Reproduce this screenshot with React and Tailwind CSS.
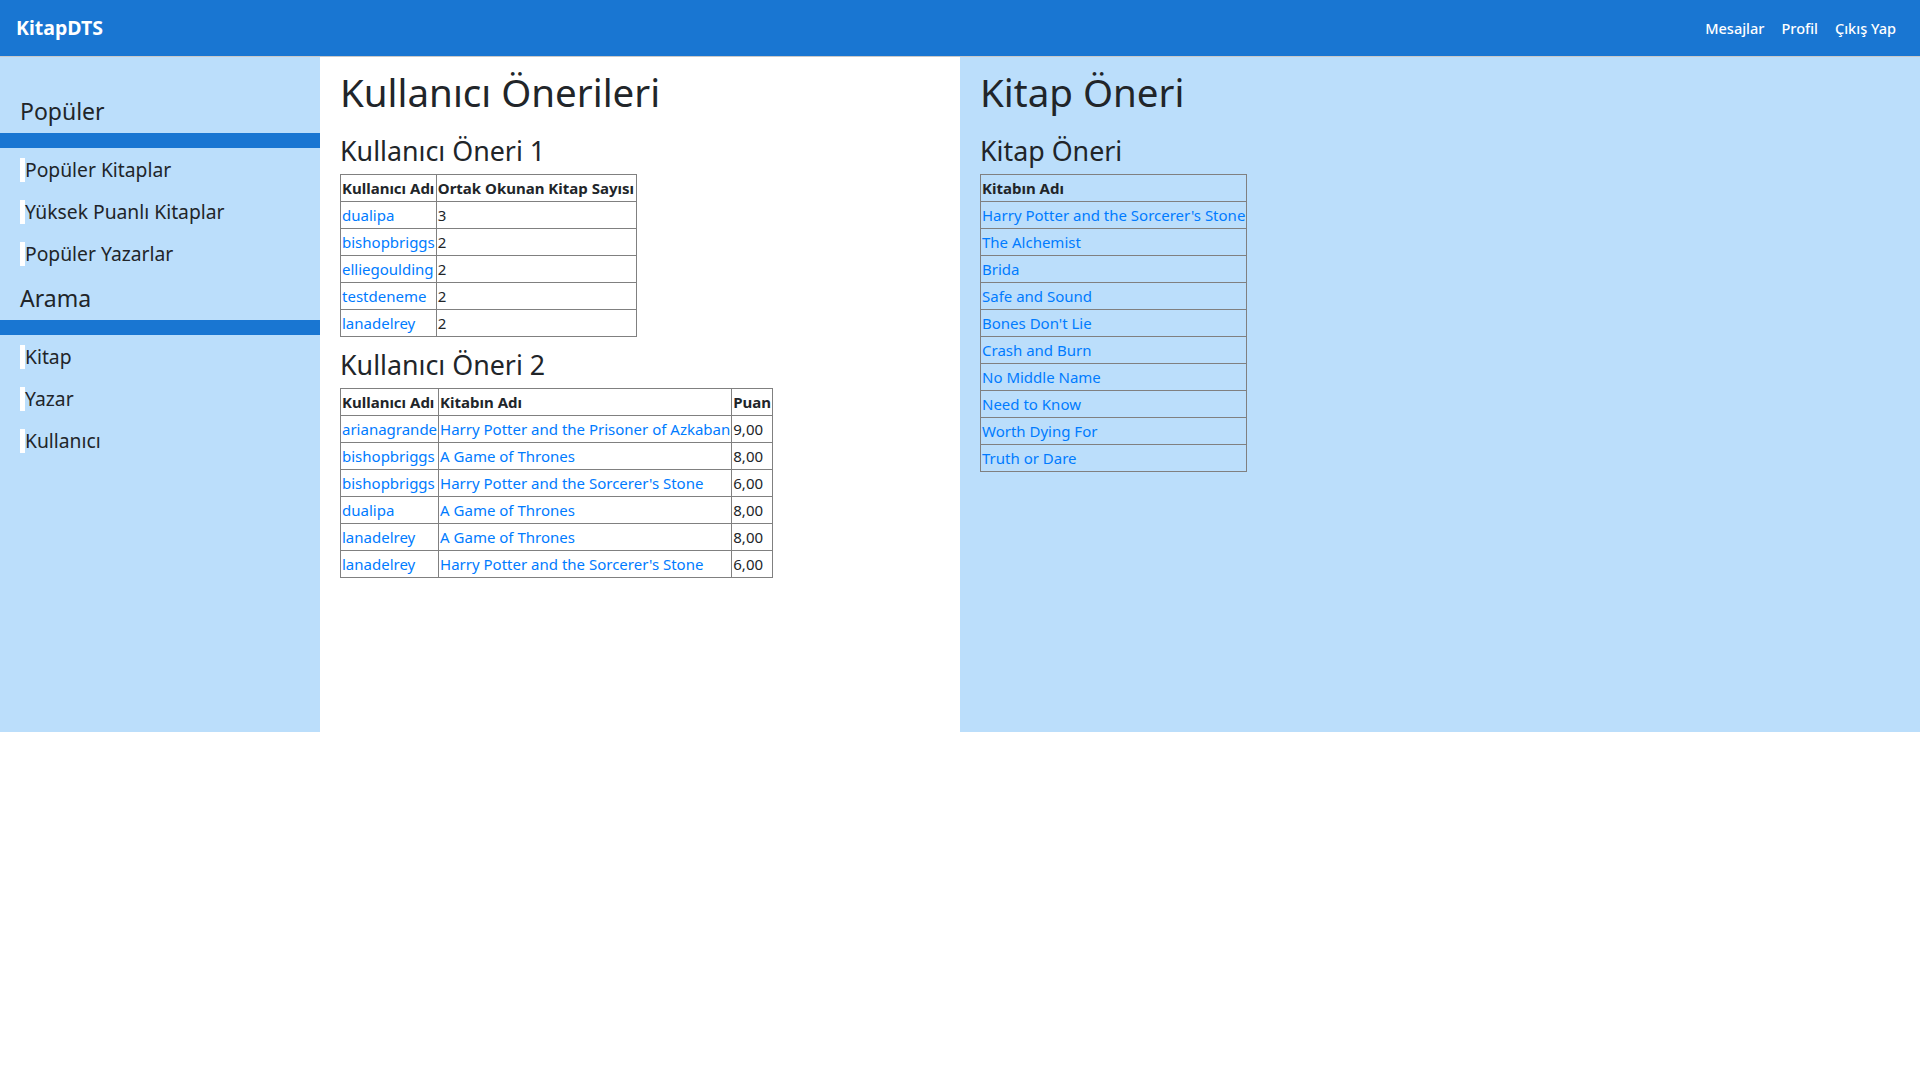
import React from "react";

const oneri1 = [
  ["dualipa", "3"],
  ["bishopbriggs", "2"],
  ["elliegoulding", "2"],
  ["testdeneme", "2"],
  ["lanadelrey", "2"],
];

const oneri2 = [
  ["arianagrande", "Harry Potter and the Prisoner of Azkaban", "9,00"],
  ["bishopbriggs", "A Game of Thrones", "8,00"],
  ["bishopbriggs", "Harry Potter and the Sorcerer's Stone", "6,00"],
  ["dualipa", "A Game of Thrones", "8,00"],
  ["lanadelrey", "A Game of Thrones", "8,00"],
  ["lanadelrey", "Harry Potter and the Sorcerer's Stone", "6,00"],
];

const kitaplar = [
  "Harry Potter and the Sorcerer's Stone",
  "The Alchemist",
  "Brida",
  "Safe and Sound",
  "Bones Don't Lie",
  "Crash and Burn",
  "No Middle Name",
  "Need to Know",
  "Worth Dying For",
  "Truth or Dare",
];

const th = "border border-[#808080] px-[1px] py-[1px] text-[15px] leading-6 text-left font-bold whitespace-nowrap";
const td = "border border-[#808080] px-[1px] py-[1px] text-[15px] leading-6 whitespace-nowrap";
const link = "text-[#007bff]";

const SideSection = ({ title, items, first }) => (
  <>
    <h4 className={`px-5 text-[23px] leading-[29px] mb-[7px] ${first ? "" : "mt-[18px]"}`}>{title}</h4>
    <div className="h-[15px] bg-[#1976d2]"></div>
    <ul className="mt-[10px] flex flex-col gap-[18px] px-5">
      {items.map((it) => (
        <li key={it}>
          <a href="#" className="block border-l-[5px] border-white text-[19.3px] leading-6 text-[#212529]">
            {it}
          </a>
        </li>
      ))}
    </ul>
  </>
);

export default function App() {
  return (
    <div
      className="min-h-screen bg-white text-[#212529]"
      style={{ fontFamily: '"Noto Sans", "Open Sans", sans-serif' }}
    >
      <nav className="h-[57px] bg-[#1976d2] border-b border-[#c9c9c9] flex items-center justify-between pl-4 pr-6">
        <a href="#" className="text-white text-[19.5px] font-bold">KitapDTS</a>
        <div className="flex gap-[17px] pt-[2px] text-white text-[14.5px] font-medium">
          <a href="#">Mesajlar</a>
          <a href="#">Profil</a>
          <a href="#">Çıkış Yap</a>
        </div>
      </nav>

      <div className="flex h-[675px]">
        {/* sol menü */}
        <aside className="w-[320px] bg-[#bbdefb] pt-[40px]">
          <SideSection title="Popüler" first items={["Popüler Kitaplar", "Yüksek Puanlı Kitaplar", "Popüler Yazarlar"]} />
          <SideSection title="Arama" items={["Kitap", "Yazar", "Kullanıcı"]} />
        </aside>

        {/* kullanıcı önerileri */}
        <section className="w-[640px] bg-white px-5 pt-[11px]">
          <h1 className="text-[38.5px] leading-[48px] mb-[18px]">Kullanıcı Önerileri</h1>
          <h3 className="text-[26.8px] leading-[34px] mb-[6px]">Kullanıcı Öneri 1</h3>
          <table className="border-collapse">
            <thead>
              <tr>
                <th className={th}>Kullanıcı Adı</th>
                <th className={`${th} min-w-[200px]`}>Ortak Okunan Kitap Sayısı</th>
              </tr>
            </thead>
            <tbody>
              {oneri1.map(([u, n]) => (
                <tr key={u}>
                  <td className={td}><a href="#" className={link}>{u}</a></td>
                  <td className={td}>{n}</td>
                </tr>
              ))}
            </tbody>
          </table>

          <h3 className="text-[26.8px] leading-[34px] mt-[11px] mb-[6px]">Kullanıcı Öneri 2</h3>
          <table className="border-collapse">
            <thead>
              <tr>
                <th className={th}>Kullanıcı Adı</th>
                <th className={th}>Kitabın Adı</th>
                <th className={th}>Puan</th>
              </tr>
            </thead>
            <tbody>
              {oneri2.map(([u, k, p], i) => (
                <tr key={i}>
                  <td className={td}><a href="#" className={link}>{u}</a></td>
                  <td className={td}><a href="#" className={link}>{k}</a></td>
                  <td className={td}>{p}</td>
                </tr>
              ))}
            </tbody>
          </table>
        </section>

        {/* kitap önerisi */}
        <section className="flex-1 bg-[#bbdefb] px-5 pt-[11px]">
          <h1 className="text-[38.5px] leading-[48px] mb-[18px]">Kitap Öneri</h1>
          <h3 className="text-[26.8px] leading-[34px] mb-[6px]">Kitap Öneri</h3>
          <table className="border-collapse">
            <thead>
              <tr>
                <th className={th}>Kitabın Adı</th>
              </tr>
            </thead>
            <tbody>
              {kitaplar.map((k) => (
                <tr key={k}>
                  <td className={td}><a href="#" className={link}>{k}</a></td>
                </tr>
              ))}
            </tbody>
          </table>
        </section>
      </div>
    </div>
  );
}
